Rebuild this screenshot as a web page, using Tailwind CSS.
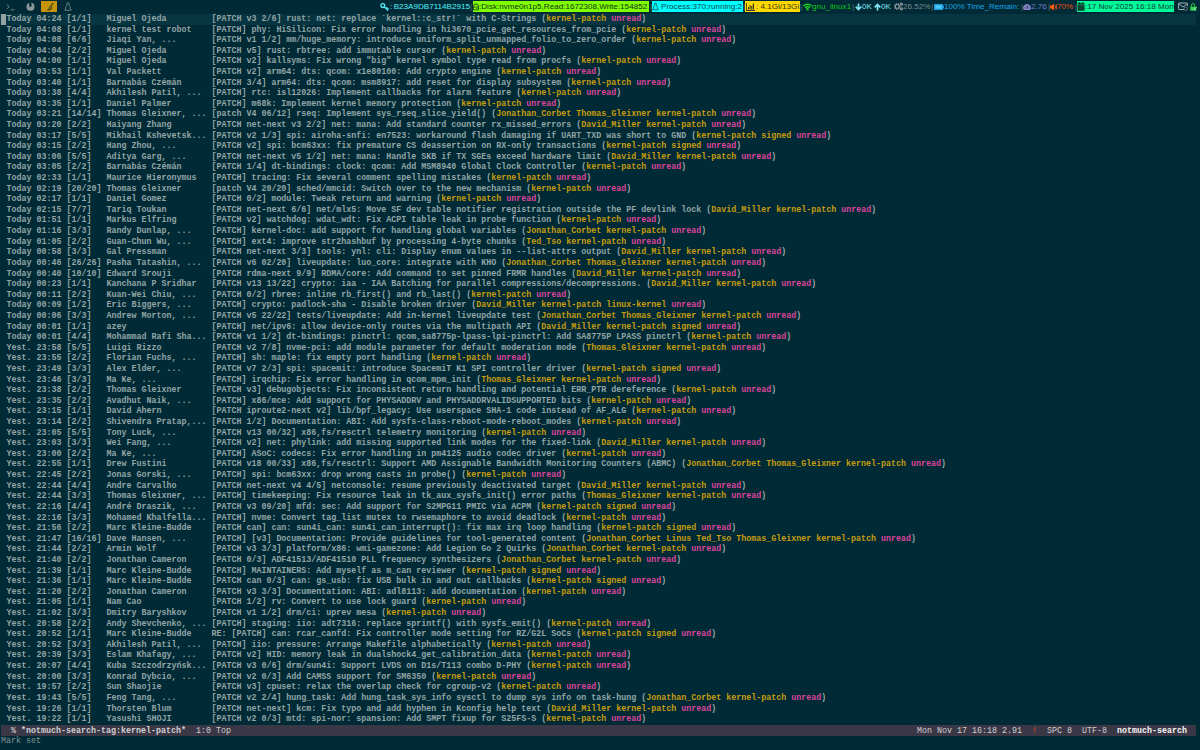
<!DOCTYPE html>
<html lang="en">
<head>
    <meta charset="UTF-8">
    <meta name="viewport" content="width=device-width, initial-scale=1.0">
    <script src="https://cdn.jsdelivr.net/npm/@tailwindcss/browser@4"></script>
    <title>notmuch-search</title>
</head>
<body class="bg-[#002b36] w-[1200px] h-[750px] overflow-hidden flex flex-col">
    <!-- status bar -->
    <div class="flex justify-between h-[13px] shrink-0 pt-px font-['Liberation_Sans',sans-serif] text-[8.1px] leading-[11px] whitespace-nowrap">
        <div class="flex h-[11px]">
            <div class="w-[21px] flex items-center pl-[6px]">
                <svg class="w-[10px] h-[8px]" viewBox="0 0 10 8" fill="none" stroke="#7b8a8c" stroke-width=".9"><path d="M.8 1.5 3.2 3.7.8 6M4.5 6.8h4"/></svg>
            </div>
            <div class="w-[20px] flex items-center pl-[5px]">
                <svg class="w-[9px] h-[9px]" viewBox="0 0 9 9"><circle cx="4.5" cy="4.7" r="4" fill="#8c999b"/><path d="M2.5 0 5 .6 5.8 3 4.8 5 3 4.5 3.4 3z" fill="#002b36"/></svg>
            </div>
            <div class="w-[16px] flex items-center justify-center bg-[#c4940a]">
                <svg class="w-[8px] h-[9px] ml-[4px]" viewBox="0 0 8 9" fill="none" stroke="#4c4a1a" stroke-width="1.2"><path d="M6.3 1 3.6 4.2M3.6 4.2C2 4.8 3 6.8 1.2 7.8 3.6 8.2 4.8 6.8 4.6 5z"/></svg>
            </div>
            <div class="w-[22px] flex items-center justify-center">
                <svg class="w-[8px] h-[9px]" viewBox="0 0 8 9" fill="none" stroke="#7b8a8c" stroke-width=".9"><path d="M3 1.5C3 .3 5 .3 5 1.5v1.7C6 4.5 6.5 5.5 6.2 6.7L7.3 8 5.4 8.3H2.6L.7 8l1.1-1.3C1.5 5.5 2 4.5 3 3.2z"/></svg>
            </div>
        </div>
        <div class="flex h-[11px] text-[#586e75]">
            <div class="w-[90px] flex items-center text-[#52f0f8]">
                <svg class="w-[9px] h-[8px] mr-[1px] shrink-0" viewBox="0 0 9 8" fill="none" stroke="#52f0f8" stroke-width="1.3"><circle cx="2.8" cy="2.6" r="1.9"/><path d="m4.2 4 4 3.4M6 5.4l1.2-1.2M7.3 6.4 8.5 5.2"/></svg>
                <span class="w-[4px]">:</span><span>B23A9DB7114B2915</span>
            </div>
            <span class="w-[3px]">|</span>
            <div class="w-[176px] flex items-center bg-[#7fff00] text-[#123018]">
                <svg class="w-[6px] h-[8px] shrink-0" viewBox="0 0 7 8" fill="none" stroke="#123018" stroke-width=".9"><path d="M.5 4 1.5.7h4L6.5 4v3.3h-6zM.5 4h6M4 5.7h1.3"/></svg>
                <span>:Disk:nvme0n1p5,Read:1672308,Write:154852</span>
            </div>
            <span class="w-[3px] pl-px">|</span>
            <div class="w-[91px] flex items-center bg-[#00ffff] text-[#10404a]">
                <svg class="w-[7px] h-[9px] mr-[2px] shrink-0" viewBox="0 0 8 9" fill="none" stroke="#10404a" stroke-width=".9"><path d="M3 1.5C3 .3 5 .3 5 1.5v1.7C6 4.5 6.5 5.5 6.2 6.7L7.3 8 5.4 8.3H2.6L.7 8l1.1-1.3C1.5 5.5 2 4.5 3 3.2z"/></svg>
                <span>Process:370;running:2</span>
            </div>
            <span class="w-[2px]">|</span>
            <div class="w-[55px] flex items-center bg-[#ffd800] text-[#33341a]">
                <svg class="w-[9px] h-[8px] mx-px shrink-0" viewBox="0 0 9 8" fill="#33341a"><path d="M0 0h.8v7H9v1H0zM2 4h1v2.5H2zM3.6 2h1v4.5h-1zM5.2 3h1v3.5h-1zM6.8.5h1.2v6H6.8z"/></svg>
                <span>: 4.1Gi/13Gi</span>
            </div>
            <span class="w-[3px]">|</span>
            <div class="w-[49px] flex items-center text-[#10c81c]">
                <svg class="w-[9px] h-[8px] shrink-0" viewBox="0 0 10 8" fill="none" stroke="#10d81c" stroke-width="1.6"><path d="M.5 2.8Q5-.8 9.5 2.8M2.2 4.8Q5 2.4 7.8 4.8"/><circle cx="5" cy="6.6" r=".6"/></svg>
                <span>gnu_linux1</span>
            </div>
            <span class="w-[3px]">|</span>
            <div class="w-[39px] flex items-center text-[#80e4f4]">
                <svg class="w-[7px] h-[8px] shrink-0" viewBox="0 0 7 8" fill="none" stroke="#80e4f4" stroke-width="1.7"><path d="M3.5.5v6M.7 3.7l2.8 2.8 2.8-2.8"/></svg>
                <span class="w-[12px]">0K</span>
                <svg class="w-[7px] h-[8px] shrink-0" viewBox="0 0 7 8" fill="none" stroke="#80e4f4" stroke-width="1.7"><path d="M3.5 7.5v-6M.7 4.3l2.8-2.8 2.8 2.8"/></svg>
                <span>0K</span>
            </div>
            <div class="w-[37px] flex items-center text-[#7a888b]">
                <svg class="w-[9px] h-[9px] shrink-0" viewBox="0 0 9 9" fill="none" stroke="#8a979a" stroke-width="1.2"><circle cx="3.2" cy="4.5" r="2" /><circle cx="3.2" cy="4.5" r="2.8" stroke-dasharray="1 1"/><circle cx="7.4" cy="2.2" r="1"/><circle cx="7.4" cy="6.8" r="1"/></svg>
                <span>26.52%</span>
            </div>
            <span class="w-[3px]">|</span>
            <div class="w-[87px] flex items-center text-[#1ca4e4]">
                <svg class="w-[10px] h-[6px] shrink-0" viewBox="0 0 10 6" fill="#1c9ad8"><path d="M0 0h9v1.5h1v3H9V6H0z"/><path d="M1.3 1.3h6.4v3.4H1.3z" fill="#48c8ff"/></svg>
                <span>100% Time_Remain:</span>
            </div>
            <span class="w-[2px]">|</span>
            <div class="w-[25px] flex items-center text-[#7b78cc]">
                <svg class="w-[8px] h-[8px] shrink-0" viewBox="0 0 9 8"><path d="M1.2 7.5A4.2 4.2 0 1 1 7.8 7.5z" fill="#8a83c8"/><path d="M4.5 6 5.2 2.4M1.8 4.8h.8M6.5 4.8h.8M2.7 2.5l.6.6" stroke="#002b36" stroke-width=".8"/></svg>
                <span>2.76</span>
            </div>
            <span class="w-[2px]">|</span>
            <div class="w-[25px] flex items-center text-[#f04e14]">
                <svg class="w-[7px] h-[8px] shrink-0" viewBox="0 0 7 8"><path d="M0 2.5h1.5L4 .4v7.2L1.5 5.5H0z" fill="#ff5a10"/><path d="M5 2.4q1 1.6 0 3.2M6 1.2q1.6 2.8 0 5.6" fill="none" stroke="#ff5a10" stroke-width=".8"/></svg>
                <span>70%</span>
            </div>
            <span class="w-[2px]">|</span>
            <div class="w-[97px] flex items-center bg-[#00fa9a] text-[#0c4030]">
                <svg class="w-[8px] h-[9px] shrink-0" viewBox="0 0 8 9" fill="#0c4030"><path d="M.5 1h7v7.8h-7z"/><path d="M.5 2.8h7" stroke="#00c878" stroke-width=".6"/><path d="M1.8 0h1v2h-1zM5.2 0h1v2h-1z"/></svg>
                <span>:17 Nov 2025 16:18 Mon</span>
            </div>
            <div class="w-[26px] flex items-center pl-[4px]">
                <svg class="w-[10px] h-[9px]" viewBox="0 0 10 9" fill="none" stroke="#a5afb0" stroke-width="1"><path d="M6 7.5H1.2q-.6 0-.6-.6V1.6Q.6 1 1.2 1h7.6q.6 0 .6.6V4M.8 1.8 5 5l4.2-3.2"/><circle cx="7.8" cy="6.6" r="1.7" stroke="#66757a"/></svg>
                <svg class="w-[7px] h-[8px] ml-[2px]" viewBox="0 0 7 8"><path d="M1.3 4V2.4a1.7 1.7 0 0 1 3.4 0V4" fill="none" stroke="#30d050" stroke-width="1"/><path d="M.3 3.7h6v4h-6z" fill="#30d050"/><path d="m3 5.5 1.3 1.4L6.8 4" stroke="#d0ffd0" stroke-width=".7" fill="none"/></svg>
            </div>
        </div>
    </div>

    <!-- search results -->
    <div class="flex flex-col h-[712px] pt-[.9px] shrink-0 font-['Liberation_Mono',monospace] font-bold text-[8.33px] leading-[10.62px] text-[#93a5a6] whitespace-pre" id="results"></div>

    <!-- mode line -->
    <div class="flex items-center justify-between w-[1195px] h-[11px] ml-px pl-[10px] pr-[9px] shrink-0 bg-[#3a3846] font-['Liberation_Mono',monospace] text-[8.33px] leading-[10px] text-[#cfcfd2] whitespace-pre">
        <div><span class="font-bold">% *notmuch-search-tag:kernel-patch*</span>  1:0 Top</div>
        <div>Mon Nov 17 16:18 2.91  <span class="text-[#e8402c]">!</span>  SPC 8  UTF-8  <span class="font-bold text-[#f4f4f4]">notmuch-search</span></div>
    </div>
    <div class="pl-px font-['Liberation_Mono',monospace] text-[8.33px] leading-[11px] text-[#839496]">Mark set</div>

    <script>
// date | count | authors | subject | tags (kernel-patch and unread are on every thread)
const threads = `Today 04:24|1/1|Miguel Ojeda|[PATCH v3 2/6] rust: net: replace \`kernel::c_str!\` with C-Strings|
Today 04:08|1/1|kernel test robot|[PATCH] phy: HiSilicon: Fix error handling in hi3670_pcie_get_resources_from_pcie|
Today 04:08|6/6|Jiaqi Yan, ...|[PATCH v1 1/2] mm/huge_memory: introduce uniform_split_unmapped_folio_to_zero_order|
Today 04:04|2/2|Miguel Ojeda|[PATCH v5] rust: rbtree: add immutable cursor|
Today 04:00|1/1|Miguel Ojeda|[PATCH v2] kallsyms: Fix wrong "big" kernel symbol type read from procfs|
Today 03:53|1/1|Val Packett|[PATCH v2] arm64: dts: qcom: x1e80100: Add crypto engine|
Today 03:40|1/1|Barnabás Czémán|[PATCH 3/4] arm64: dts: qcom: msm8917: add reset for display subsystem|
Today 03:38|4/4|Akhilesh Patil, ...|[PATCH] rtc: isl12026: Implement callbacks for alarm feature|
Today 03:35|1/1|Daniel Palmer|[PATCH] m68k: Implement kernel memory protection|
Today 03:21|14/14|Thomas Gleixner, ...|[patch V4 06/12] rseq: Implement sys_rseq_slice_yield()|Jonathan_Corbet Thomas_Gleixner
Today 03:20|2/2|Haiyang Zhang|[PATCH net-next v3 2/2] net: mana: Add standard counter rx_missed_errors|David_Miller
Today 03:17|5/5|Mikhail Kshevetsk...|[PATCH v2 1/3] spi: airoha-snfi: en7523: workaround flash damaging if UART_TXD was short to GND|signed
Today 03:15|2/2|Hang Zhou, ...|[PATCH v2] spi: bcm63xx: fix premature CS deassertion on RX-only transactions|signed
Today 03:06|5/5|Aditya Garg, ...|[PATCH net-next v5 1/2] net: mana: Handle SKB if TX SGEs exceed hardware limit|David_Miller
Today 03:05|2/2|Barnabás Czémán|[PATCH 1/4] dt-bindings: clock: qcom: Add MSM8940 Global Clock Controller|
Today 02:33|1/1|Maurice Hieronymus|[PATCH] tracing: Fix several comment spelling mistakes|
Today 02:19|20/20|Thomas Gleixner|[patch V4 20/20] sched/mmcid: Switch over to the new mechanism|
Today 02:17|1/1|Daniel Gomez|[PATCH 0/2] module: Tweak return and warning|
Today 02:15|7/7|Tariq Toukan|[PATCH net-next 6/6] net/mlx5: Move SF dev table notifier registration outside the PF devlink lock|David_Miller
Today 01:51|1/1|Markus Elfring|[PATCH v2] watchdog: wdat_wdt: Fix ACPI table leak in probe function|
Today 01:16|3/3|Randy Dunlap, ...|[PATCH] kernel-doc: add support for handling global variables|Jonathan_Corbet
Today 01:05|2/2|Guan-Chun Wu, ...|[PATCH] ext4: improve str2hashbuf by processing 4-byte chunks|Ted_Tso
Today 00:58|3/3|Gal Pressman|[PATCH net-next 3/3] tools: ynl: cli: Display enum values in --list-attrs output|David_Miller
Today 00:46|26/26|Pasha Tatashin, ...|[PATCH v6 02/20] liveupdate: luo_core: integrate with KHO|Jonathan_Corbet Thomas_Gleixner
Today 00:40|10/10|Edward Srouji|[PATCH rdma-next 9/9] RDMA/core: Add command to set pinned FRMR handles|David_Miller
Today 00:23|1/1|Kanchana P Sridhar|[PATCH v13 13/22] crypto: iaa - IAA Batching for parallel compressions/decompressions.|David_Miller
Today 00:11|2/2|Kuan-Wei Chiu, ...|[PATCH 0/2] rbree: inline rb_first() and rb_last()|
Today 00:09|1/2|Eric Biggers, ...|[PATCH] crypto: padlock-sha - Disable broken driver|David_Miller linux-kernel
Today 00:06|3/3|Andrew Morton, ...|[PATCH v5 22/22] tests/liveupdate: Add in-kernel liveupdate test|Jonathan_Corbet Thomas_Gleixner
Today 00:01|1/1|azey|[PATCH] net/ipv6: allow device-only routes via the multipath API|David_Miller signed
Today 00:01|4/4|Mohammad Rafi Sha...|[PATCH v1 1/2] dt-bindings: pinctrl: qcom,sa8775p-lpass-lpi-pinctrl: Add SA8775P LPASS pinctrl|
Yest. 23:58|5/5|Luigi Rizzo|[PATCH v2 7/8] nvme-pci: add module parameter for default moderation mode|Thomas_Gleixner
Yest. 23:55|2/2|Florian Fuchs, ...|[PATCH] sh: maple: fix empty port handling|
Yest. 23:49|3/3|Alex Elder, ...|[PATCH v7 2/3] spi: spacemit: introduce SpacemiT K1 SPI controller driver|signed
Yest. 23:46|3/3|Ma Ke, ...|[PATCH] irqchip: Fix error handling in qcom_mpm_init|Thomas_Gleixner
Yest. 23:38|2/2|Thomas Gleixner|[PATCH v3] debugobjects: Fix inconsistent return handling and potential ERR_PTR dereference|
Yest. 23:35|2/2|Avadhut Naik, ...|[PATCH] x86/mce: Add support for PHYSADDRV and PHYSADDRVALIDSUPPORTED bits|
Yest. 23:15|1/1|David Ahern|[PATCH iproute2-next v2] lib/bpf_legacy: Use userspace SHA-1 code instead of AF_ALG|
Yest. 23:14|2/2|Shivendra Pratap,...|[PATCH 1/2] Documentation: ABI: Add sysfs-class-reboot-mode-reboot_modes|
Yest. 23:05|5/5|Tony Luck, ...|[PATCH v13 00/32] x86,fs/resctrl telemetry monitoring|
Yest. 23:03|3/3|Wei Fang, ...|[PATCH v2] net: phylink: add missing supported link modes for the fixed-link|David_Miller
Yest. 23:00|2/2|Ma Ke, ...|[PATCH] ASoC: codecs: Fix error handling in pm4125 audio codec driver|
Yest. 22:55|1/1|Drew Fustini|[PATCH v18 00/33] x86,fs/resctrl: Support AMD Assignable Bandwidth Monitoring Counters (ABMC)|Jonathan_Corbet Thomas_Gleixner
Yest. 22:45|2/2|Jonas Gorski, ...|[PATCH] spi: bcm63xx: drop wrong casts in probe()|
Yest. 22:44|4/4|Andre Carvalho|[PATCH net-next v4 4/5] netconsole: resume previously deactivated target|David_Miller
Yest. 22:44|3/3|Thomas Gleixner, ...|[PATCH] timekeeping: Fix resource leak in tk_aux_sysfs_init() error paths|Thomas_Gleixner
Yest. 22:16|4/4|André Draszik, ...|[PATCH v3 09/20] mfd: sec: Add support for S2MPG11 PMIC via ACPM|signed
Yest. 22:16|3/3|Mohamed Khalfella...|[PATCH] nvme: Convert tag_list mutex to rwsemaphore to avoid deadlock|
Yest. 21:56|2/2|Marc Kleine-Budde|[PATCH can] can: sun4i_can: sun4i_can_interrupt(): fix max irq loop handling|signed
Yest. 21:47|16/16|Dave Hansen, ...|[PATCH] [v3] Documentation: Provide guidelines for tool-generated content|Jonathan_Corbet Linus Ted_Tso Thomas_Gleixner
Yest. 21:44|2/2|Armin Wolf|[PATCH v3 3/3] platform/x86: wmi-gamezone: Add Legion Go 2 Quirks|Jonathan_Corbet
Yest. 21:40|2/2|Jonathan Cameron|[PATCH 0/3] ADF41513/ADF41510 PLL frequency synthesizers|Jonathan_Corbet
Yest. 21:39|1/1|Marc Kleine-Budde|[PATCH] MAINTAINERS: Add myself as m_can reviewer|signed
Yest. 21:36|1/1|Marc Kleine-Budde|[PATCH can 0/3] can: gs_usb: fix USB bulk in and out callbacks|signed
Yest. 21:20|2/2|Jonathan Cameron|[PATCH v3 3/3] Documentation: ABI: adl8113: add documentation|
Yest. 21:05|1/1|Nam Cao|[PATCH 1/2] rv: Convert to use lock guard|
Yest. 21:02|3/3|Dmitry Baryshkov|[PATCH v1 1/2] drm/ci: uprev mesa|
Yest. 20:58|2/2|Andy Shevchenko, ...|[PATCH] staging: iio: adt7316: replace sprintf() with sysfs_emit()|
Yest. 20:52|1/1|Marc Kleine-Budde|RE: [PATCH] can: rcar_canfd: Fix controller mode setting for RZ/G2L SoCs|signed
Yest. 20:52|3/3|Akhilesh Patil, ...|[PATCH] iio: pressure: Arrange Makefile alphabetically|
Yest. 20:39|3/3|Eslam Khafagy, ...|[PATCH v2] HID: memory leak in dualshock4_get_calibration_data|
Yest. 20:07|4/4|Kuba Szczodrzyńsk...|[PATCH v3 0/6] drm/sun4i: Support LVDS on D1s/T113 combo D-PHY|
Yest. 20:00|3/3|Konrad Dybcio, ...|[PATCH v2 0/3] Add CAMSS support for SM6350|
Yest. 19:57|2/2|Sun Shaojie|[PATCH v3] cpuset: relax the overlap check for cgroup-v2|
Yest. 19:43|5/5|Feng Tang, ...|[PATCH v2 2/4] hung_task: Add hung_task_sys_info sysctl to dump sys info on task-hung|Jonathan_Corbet
Yest. 19:26|1/1|Thorsten Blum|[PATCH net-next] kcm: Fix typo and add hyphen in Kconfig help text|David_Miller
Yest. 19:22|1/1|Yasushi SHOJI|[PATCH v2 0/3] mtd: spi-nor: spansion: Add SMPT fixup for S25FS-S|`;

const results = document.querySelector('#results');
threads.split('\n').forEach((line, i) => {
    const [date, count, authors, subject, extra] = line.split('|');
    const tags = `kernel-patch ${extra}`.trim().split(' ').sort().join(' ');
    // the cursor sits on the first thread
    const cursor = i === 0 ? '<span class="w-[5px] bg-[#93a1a1]"></span>' : '<span class="w-[5px]"></span>';
    results.insertAdjacentHTML('beforeend', `<div class="flex h-[10.62px] shrink-0 pl-px ${i === 0 ? 'bg-[#073642] mr-[4px]' : ''}">${cursor}<span class="pl-[.5px]">${date} ${`[${count}]`.padEnd(8)}${authors.padEnd(21)}${subject} (<span class="text-[#c79b10]">${tags}</span> <span class="text-[#dc4499]">unread</span>)</span></div>`);
});
    </script>
</body>
</html>
